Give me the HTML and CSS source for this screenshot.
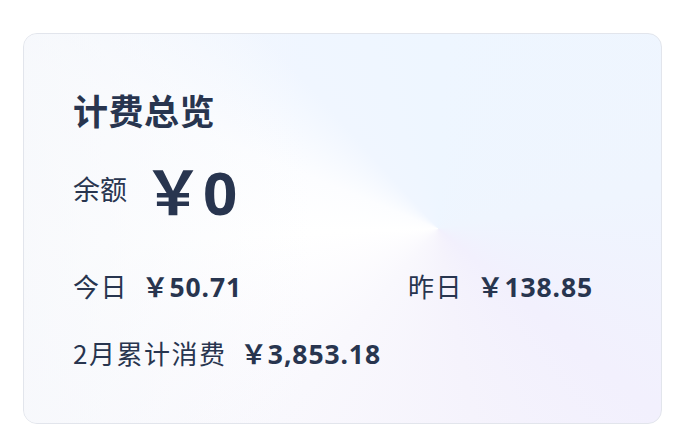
FILE: index.html
```html
<!DOCTYPE html>
<html lang="zh-CN">
<head>
<meta charset="utf-8">
<title>计费总览</title>
<link rel="stylesheet" href="styles.css">
</head>
<body>
<section class="card">
  <h1 class="title">计费总览</h1>
  <div class="balance">
    <span class="label">余额</span>
    <span class="big-amount">￥0</span>
  </div>
  <div class="stats">
    <div class="stat">
      <span class="label">今日</span>
      <span class="amount">￥50.71</span>
    </div>
    <div class="stat">
      <span class="label">昨日</span>
      <span class="amount">￥138.85</span>
    </div>
    <div class="stat stat-wide">
      <span class="label">2月累计消费</span>
      <span class="amount">￥3,853.18</span>
    </div>
  </div>
</section>
</body>
</html>
```
FILE: styles.css
```css
html, body {
  margin: 0;
  padding: 0;
  background: #ffffff;
}
body {
  padding: 33px 0 0 23px;
  font-family: "Noto Sans", "Noto Sans CJK SC", sans-serif;
  color: #28354f;
}
.card {
  box-sizing: border-box;
  width: 639px;
  height: 391px;
  border: 1.5px solid #e2e5ec;
  border-radius: 14px;
  padding: 56px 48px 0 49px;
  background:
    conic-gradient(from 0deg at 65% 50%,
      #eef6ff 0deg,
      #eff5fe 80deg,
      #f2f0fd 130deg,
      #f5f3fc 170deg,
      #f9f8fd 220deg,
      #ffffff 268deg,
      #fcfdff 292deg,
      #f0f6ff 318deg,
      #eef6ff 360deg);
  position: relative;
  overflow: hidden;
}
.card::before {
  content: "";
  position: absolute;
  inset: 0;
  background: linear-gradient(90deg, rgba(245,247,251,0.7) 0%, rgba(245,247,251,0) 45%);
  pointer-events: none;
}
.card > * { position: relative; }
.title {
  margin: 0;
  font-family: "Noto Sans CJK SC", sans-serif;
  font-size: 35px;
  line-height: 40px;
  font-weight: 700;
  letter-spacing: 0.5px;
}
.balance {
  display: flex;
  align-items: center;
  margin-top: 30px;
  height: 64px;
}
.label {
  font-family: "Noto Sans CJK SC", sans-serif;
  font-weight: 400;
}
.balance .label {
  font-size: 27px;
  margin-right: 16px;
  margin-top: -8px;
}
.big-amount {
  font-size: 60px;
  font-weight: 700;
  line-height: 64px;
}
.stats {
  display: grid;
  grid-template-columns: 335px 1fr;
  row-gap: 31px;
  margin-top: 43px;
}
.stat {
  display: flex;
  align-items: center;
  height: 36px;
}
.stat-wide { grid-column: 1 / span 2; }
.stat .label {
  font-size: 26px;
  letter-spacing: 1.5px;
  margin-right: 14px;
}
.amount {
  font-size: 26.5px;
  font-weight: 700;
  letter-spacing: 0.9px;
}
```
